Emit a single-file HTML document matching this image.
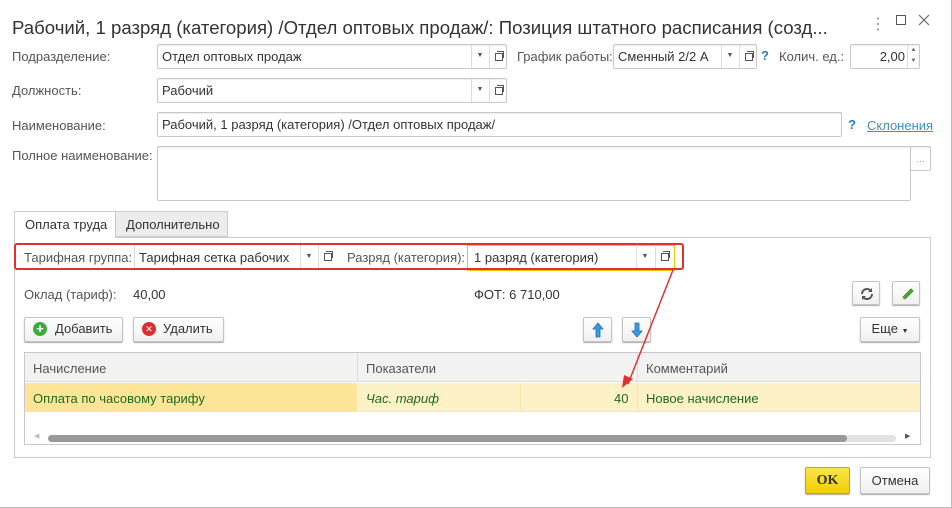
<!DOCTYPE html>
<html><head><meta charset="utf-8"><style>
*{box-sizing:border-box;margin:0;padding:0}
body{width:952px;height:508px;background:#fff;font-family:"Liberation Sans",Arial,sans-serif;font-size:13px;color:#333;position:relative;overflow:hidden;border-right:1px solid #bbb;border-bottom:1px solid #bbb}
.a{position:absolute;white-space:nowrap}
.box{position:absolute;border:1px solid #c8c8c8;border-radius:2px;background:#fff;box-shadow:inset 0 1px 1px #eee}
.t{position:absolute;top:4px;left:4px}
.dd{position:absolute;top:0;bottom:0;width:17px;border-left:1px solid #ddd;font-size:7px;color:#555;text-align:center;line-height:22px}
.cp{position:absolute;top:0;bottom:0;width:17px;border-left:1px solid #ddd}
.cp:before{content:"";position:absolute;left:5px;top:8px;width:6px;height:6px;border:1px solid #555}
.cp:after{content:"";position:absolute;left:7px;top:6px;width:6px;height:6px;border-top:1px solid #555;border-right:1px solid #555}
.lbl{color:#555}
.btn{position:absolute;border:1px solid #c4c4c4;border-radius:2px;background:linear-gradient(#fff,#f0f0f0);box-shadow:0 1px 1px #aaa;text-align:center;line-height:22px;color:#333}
</style></head><body>
<div class="a" style="left:12px;top:17px;font-size:18.6px;color:#333">Рабочий, 1 разряд (категория) /Отдел оптовых продаж/: Позиция штатного расписания (созд...</div>
<div class="a" style="left:870px;top:14px;font-size:16px;color:#888">⋮</div>
<div class="a" style="left:896px;top:15px;width:10px;height:10px;border:1px solid #555"></div>
<svg class="a" style="left:918px;top:14px" width="12" height="12"><path d="M1 1L11 11M11 1L1 11" stroke="#666" stroke-width="1.2"/></svg>

<div class="a lbl" style="left:12px;top:49px">Подразделение:</div>
<div class="box" style="left:157px;top:44px;width:350px;height:25px"><span class="t">Отдел оптовых продаж</span><div class="dd" style="right:18px">▼</div><div class="cp" style="right:0"></div></div>
<div class="a lbl" style="left:517px;top:49px">График работы:</div>
<div class="box" style="left:613px;top:44px;width:144px;height:25px"><span class="t">Сменный 2/2 А</span><div class="dd" style="right:18px">▼</div><div class="cp" style="right:0"></div></div>
<div class="a" style="left:761px;top:48px;color:#2a7fc0;font-weight:bold">?</div>
<div class="a lbl" style="left:779px;top:49px">Колич. ед.:</div>
<div class="box" style="left:850px;top:44px;width:70px;height:25px"><span class="a" style="right:14px;top:4px">2,00</span><div style="position:absolute;right:0;top:0;bottom:0;width:12px;border-left:1px solid #ddd;font-size:6px;color:#666;text-align:center;line-height:11px">▲<br>▼</div></div>

<div class="a lbl" style="left:12px;top:83px">Должность:</div>
<div class="box" style="left:157px;top:78px;width:350px;height:25px"><span class="t">Рабочий</span><div class="dd" style="right:18px">▼</div><div class="cp" style="right:0"></div></div>

<div class="a lbl" style="left:12px;top:118px">Наименование:</div>
<div class="box" style="left:157px;top:112px;width:685px;height:25px"><span class="t">Рабочий, 1 разряд (категория) /Отдел оптовых продаж/</span></div>
<div class="a" style="left:848px;top:117px;color:#2a7fc0;font-weight:bold">?</div>
<div class="a" style="left:867px;top:118px;color:#3a8fd0;text-decoration:underline">Склонения</div>

<div class="a lbl" style="left:12px;top:148px">Полное наименование:</div>
<div class="box" style="left:157px;top:146px;width:754px;height:55px"></div>
<div class="box" style="left:910px;top:146px;width:21px;height:25px;color:#999;text-align:center;font-size:10px;line-height:26px">...</div>

<div class="a" style="left:14px;top:237px;width:917px;height:221px;border:1px solid #ccc"></div>
<div class="a" style="left:14px;top:211px;width:102px;height:27px;border:1px solid #ccc;border-bottom:none;background:#fff;padding:5px 10px">Оплата труда</div>
<div class="a" style="left:115px;top:211px;width:113px;height:26px;border:1px solid #ccc;background:#ececec;padding:5px 10px">Дополнительно</div>

<div class="a" style="left:467px;top:245px;width:208px;height:26px;border:1px solid #f2c200"></div>
<div class="a" style="left:14px;top:243px;width:670px;height:27px;border:2px solid #e03030;border-radius:3px"></div>
<div class="a lbl" style="left:24px;top:250px">Тарифная группа:</div>
<div class="a" style="left:134px;top:245px;width:203px;height:23px;border-left:1px solid #ddd"><span class="t" style="top:5px">Тарифная сетка рабочих</span><div class="dd" style="right:20px;line-height:24px">▼</div><div class="cp" style="right:2px"></div></div>
<div class="a lbl" style="left:347px;top:250px">Разряд (категория):</div>
<div class="a" style="left:470px;top:245px;width:205px;height:23px"><span class="t" style="top:5px">1 разряд (категория)</span><div class="dd" style="right:22px;line-height:24px">▼</div><div class="cp" style="right:3px"></div></div>

<div class="a lbl" style="left:24px;top:287px">Оклад (тариф):</div>
<div class="a" style="left:133px;top:287px">40,00</div>
<div class="a" style="left:474px;top:287px">ФОТ: 6 710,00</div>
<div class="btn" style="left:852px;top:281px;width:28px;height:24px"><svg style="position:absolute;left:7px;top:5px" width="14" height="14" viewBox="0 0 14 14"><path d="M2 7a5 5 0 0 1 9-3M12 7a5 5 0 0 1-9 3" stroke="#555" stroke-width="2" fill="none"/><path d="M12 1v4h-4zM2 13v-4h4z" fill="#555"/></svg></div>
<div class="btn" style="left:892px;top:281px;width:28px;height:24px"><svg style="position:absolute;left:7px;top:4px" width="14" height="15" viewBox="0 0 14 15"><path d="M3 11L11 3l2 2-8 8z" fill="#4caf30" stroke="#2c7a1c" stroke-width=".8"/><path d="M3 11l2 2-3 1z" fill="#e8c070"/></svg></div>

<div class="btn" style="left:24px;top:317px;width:99px;height:25px;text-align:left;padding-left:30px">Добавить<span style="position:absolute;left:8px;top:4px;width:14px;height:14px;border-radius:50%;background:#3cab3c;color:#fff;font-weight:bold;line-height:14px;text-align:center;font-size:13px">+</span></div>
<div class="btn" style="left:133px;top:317px;width:91px;height:25px;text-align:left;padding-left:29px">Удалить<span style="position:absolute;left:8px;top:4px;width:14px;height:14px;border-radius:50%;background:#d83030;color:#fff;line-height:14px;text-align:center;font-size:9px">✕</span></div>
<div class="btn" style="left:583px;top:317px;width:29px;height:25px"><svg style="position:absolute;left:8px;top:4px" width="12" height="16" viewBox="0 0 12 16"><path d="M6 1L11 7H8v8H4V7H1z" fill="#3a9ae0" stroke="#1f6fb0" stroke-width=".8"/></svg></div>
<div class="btn" style="left:622px;top:317px;width:29px;height:25px"><svg style="position:absolute;left:8px;top:4px" width="12" height="16" viewBox="0 0 12 16"><path d="M6 15L11 9H8V1H4v8H1z" fill="#3a9ae0" stroke="#1f6fb0" stroke-width=".8"/></svg></div>
<div class="btn" style="left:860px;top:317px;width:60px;height:25px">Еще <span style="font-size:7px">▼</span></div>

<div class="a" style="left:24px;top:352px;width:897px;height:93px;border:1px solid #c8c8c8"></div>
<div class="a" style="left:25px;top:353px;width:895px;height:29px;background:#f2f2f2;border-bottom:1px solid #ddd"></div>
<div class="a lbl" style="left:33px;top:361px">Начисление</div>
<div class="a" style="left:357px;top:353px;width:1px;height:29px;background:#ddd"></div>
<div class="a lbl" style="left:366px;top:361px">Показатели</div>
<div class="a" style="left:637px;top:353px;width:1px;height:29px;background:#ddd"></div>
<div class="a lbl" style="left:646px;top:361px">Комментарий</div>
<div class="a" style="left:25px;top:383px;width:332px;height:29px;background:#fce596"></div>
<div class="a" style="left:358px;top:383px;width:562px;height:29px;background:#fdf1c6;border-bottom:1px solid #e6e6e6"></div>
<div class="a" style="left:520px;top:383px;width:1px;height:29px;background:#f6e7b0"></div>
<div class="a" style="left:637px;top:383px;width:1px;height:29px;background:#f6e7b0"></div>
<div class="a" style="left:33px;top:391px;color:#1f6b1f">Оплата по часовому тарифу</div>
<div class="a" style="left:366px;top:391px;color:#1f6b1f;font-style:italic">Час. тариф</div>
<div class="a" style="left:614px;top:391px;color:#1f6b1f">40</div>
<div class="a" style="left:646px;top:391px;color:#1f6b1f">Новое начисление</div>
<div class="a" style="left:48px;top:435px;width:848px;height:7px;background:#e2e2e2;border-radius:4px"></div>
<div class="a" style="left:48px;top:435px;width:799px;height:7px;background:#999;border-radius:4px"></div>
<div class="a" style="left:34px;top:432px;font-size:7px;color:#bbb">◀</div>
<div class="a" style="left:905px;top:432px;font-size:7px;color:#555">▶</div>

<svg class="a" style="left:0;top:0" width="952" height="508"><line x1="673" y1="270" x2="628" y2="384" stroke="#e03030" stroke-width="1.5"/><polygon points="622,388 624,375 633,379" fill="#e03030"/></svg>

<div class="btn" style="left:805px;top:467px;width:45px;height:27px;background:linear-gradient(#fbe44a,#efd000);border-color:#c8a800;font-weight:bold;line-height:26px;font-family:'Liberation Serif',serif;font-size:14px">OK</div>
<div class="btn" style="left:860px;top:467px;width:70px;height:27px;line-height:26px">Отмена</div>
</body></html>
